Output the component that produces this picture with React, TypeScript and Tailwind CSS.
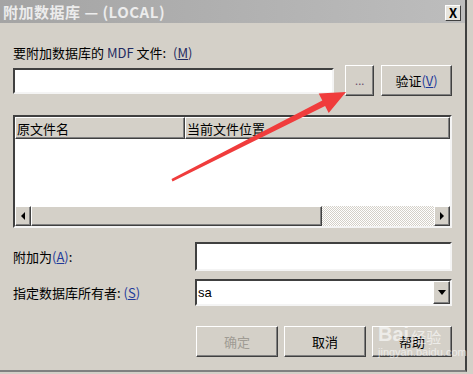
import React from "react";

const font = { fontFamily: '"Noto Sans CJK SC", "Liberation Sans", sans-serif' };

const sunken =
  "border-2 border-t-[#404040] border-l-[#404040] border-b-[#f4f4f4] border-r-[#f4f4f4] bg-white";
const raised =
  "border border-t-white border-l-white border-b-[#404040] border-r-[#404040] shadow-[inset_-1px_-1px_0_#808080] bg-[#d4d0c8]";

export default function App() {
  return (
    <div
      className="relative w-[473px] h-[374px] overflow-hidden bg-[#d4d0c8] text-[13px] text-black"
      style={font}
    >
      <div className="w-[467px] h-[372px] border-r-2 border-b-2 border-r-[#404040] border-b-[#808080] flex flex-col">
        {/* Title bar */}
        <div className="h-[23px] flex items-center justify-between bg-gradient-to-r from-[#a4a4a4] to-[#bdbdbd] pl-[3px] pr-[4px]">
          <span className="text-[15px] font-bold text-[#ececec] tracking-[0.5px] leading-none">
            附加数据库 — (LOCAL)
          </span>
          <div className="w-[16px] h-[16px] bg-[#e8e6e0] border border-t-white border-l-white border-b-[#404040] border-r-[#404040] flex items-center justify-center text-[13px] font-bold leading-none mt-[2px]">
            X
          </div>
        </div>

        <div className="flex flex-col px-[13px]">
          <div className="mt-[22px] h-[16px] leading-[16px]">
            要附加数据库的 <span className="text-[#1f2a60]">MDF</span> 文件: <span className="text-[#1f2a60] ml-[4px]">(<u>M</u>)</span>
          </div>
          <div className="mt-[4px] flex items-center h-[31px]">
            <div className={`w-[322px] h-[26px] ${sunken}`} />
            <div className={`ml-[11px] w-[29px] h-[31px] ${raised} flex items-center justify-center text-[11px] text-[#6a4c6a]`}>
              ...
            </div>
            <div className={`ml-[7px] w-[71px] h-[31px] ${raised} flex items-center justify-center`}>
              验证<span className="text-[#1f3a9a]">(<u>V</u>)</span>
            </div>
          </div>

          {/* List */}
          <div className={`mt-[19px] h-[113px] ${sunken} flex flex-col`}>
            <div className="h-[22px] flex">
              <div className={`w-[170px] ${raised} flex items-center pl-[1px] leading-none`}>原文件名</div>
              <div className={`flex-1 ${raised} flex items-center pl-[1px] leading-none`}>当前文件位置</div>
            </div>
            <div className="flex-1 bg-white" />
            <div className="h-[20px] flex">
              <div className={`w-[16px] ${raised} flex items-center justify-center`}>
                <div className="w-0 h-0 border-y-[4px] border-y-transparent border-r-[4px] border-r-black" />
              </div>
              <div className={`w-[291px] ${raised}`} />
              <div className="flex-1 bg-[repeating-conic-gradient(#ffffff_0_25%,#d4d0c8_0_50%)] bg-[length:2px_2px]" />
              <div className={`w-[16px] ${raised} flex items-center justify-center`}>
                <div className="w-0 h-0 border-y-[4px] border-y-transparent border-l-[4px] border-l-black" />
              </div>
            </div>
          </div>

          {/* Attach as */}
          <div className="mt-[14px] flex items-center h-[29px]">
            <div className="w-[182px]">
              附加为<span className="text-[#1f3a9a]">(<u>A</u>)</span>:
            </div>
            <div className={`flex-1 h-[29px] ${sunken}`} />
          </div>

          {/* Owner */}
          <div className="mt-[8px] flex items-center h-[27px]">
            <div className="w-[182px]">
              指定数据库所有者: <span className="text-[#1f3a9a]">(<u>S</u>)</span>
            </div>
            <div className={`flex-1 h-[27px] ${sunken} flex items-center justify-between`}>
              <span className="pl-[1px] text-[13px]" style={{ fontFamily: '"Liberation Sans", sans-serif' }}>sa</span>
              <div className={`w-[17px] h-[23px] ${raised} flex items-center justify-center`}>
                <div className="w-0 h-0 border-x-[4px] border-x-transparent border-t-[5px] border-t-black" />
              </div>
            </div>
          </div>

          {/* Buttons */}
          <div className="mt-[20px] flex justify-end gap-[6px]">
            <div className={`w-[82px] h-[31px] ${raised} flex items-center justify-center text-[#a09c94]`}>确定</div>
            <div className={`w-[82px] h-[31px] ${raised} flex items-center justify-center`}>取消</div>
            <div className={`w-[80px] h-[31px] ${raised} flex items-center justify-center`}>帮助</div>
          </div>
        </div>
      </div>

      {/* Red arrow annotation */}
      <svg className="absolute left-0 top-0 pointer-events-none" width="473" height="374">
        <polygon
          points="171.5,179 322.3,100.6 318.7,93.5 346,92 328.7,113.1 325.1,106 172.5,181.5"
          fill="#f03c3c"
        />
      </svg>

      {/* Watermark */}
      <div className="absolute left-[378px] top-[324px] flex flex-col items-start pointer-events-none opacity-60">
        <div className="flex items-end gap-[2px] text-white">
          <span className="text-[20px] font-bold leading-none" style={{ fontFamily: '"Liberation Sans", sans-serif' }}>Bai</span>
          <span className="text-[15px] leading-none">经验</span>
        </div>
        <span className="text-[11px] text-white leading-none mt-[3px]" style={{ fontFamily: '"Liberation Sans", sans-serif' }}>
          jingyan.baidu.com
        </span>
      </div>
    </div>
  );
}
